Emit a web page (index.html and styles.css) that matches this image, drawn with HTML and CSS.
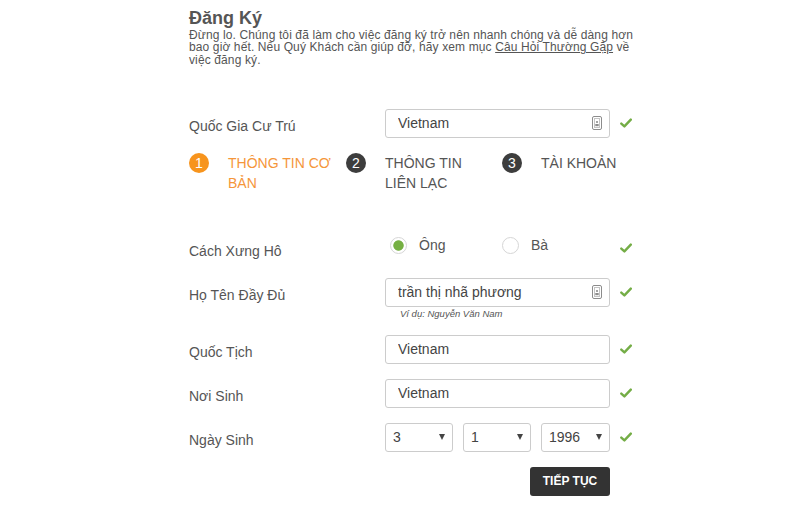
FILE: index.html
```html
<!DOCTYPE html>
<html lang="vi">
<head>
<meta charset="utf-8">
<title>Đăng Ký</title>
<link rel="stylesheet" href="styles.css">
</head>
<body>
<main class="page">
  <h1 class="title">Đăng Ký</h1>
  <p class="intro">Đừng lo. Chúng tôi đã làm cho việc đăng ký trở nên nhanh chóng và dễ dàng hơn bao giờ hết. Nếu Quý Khách cần giúp đỡ, hãy xem mục <a href="#">Câu Hỏi Thường Gặp</a> về việc đăng ký.</p>

  <form class="form">
    <div class="row">
      <label class="label">Quốc Gia Cư Trú</label>
      <div class="field">
        <div class="input">
          <input type="text" value="Vietnam">
          <svg class="card" width="10" height="14" viewBox="0 0 10 14"><rect x="0.5" y="0.5" width="9" height="13" rx="1.5" fill="none" stroke="#8c8c8c"/><rect x="2.5" y="2.5" width="5" height="9" fill="none" stroke="#c4c4c4"/><circle cx="5" cy="6" r="1.1" fill="#8c8c8c"/><rect x="3.3" y="8" width="3.4" height="2.2" fill="#8c8c8c"/></svg>
        </div>
      </div>
      <svg class="check" width="12" height="10" viewBox="0 0 12 10"><path d="M1.3 5.6 L4.4 8.4 L10.8 1.6" fill="none" stroke="#74ad46" stroke-width="2.4" stroke-linecap="round" stroke-linejoin="round"/></svg>
    </div>

    <ol class="steps">
      <li class="step active"><span class="num">1</span><span class="step-text">THÔNG TIN CƠ BẢN</span></li>
      <li class="step"><span class="num">2</span><span class="step-text">THÔNG TIN LIÊN LẠC</span></li>
      <li class="step"><span class="num">3</span><span class="step-text">TÀI KHOẢN</span></li>
    </ol>

    <div class="row row-radio">
      <label class="label">Cách Xưng Hô</label>
      <div class="field radios">
        <label class="opt"><input type="radio" name="title" checked><span>Ông</span></label>
        <label class="opt"><input type="radio" name="title"><span>Bà</span></label>
      </div>
      <svg class="check" width="12" height="10" viewBox="0 0 12 10"><path d="M1.3 5.6 L4.4 8.4 L10.8 1.6" fill="none" stroke="#74ad46" stroke-width="2.4" stroke-linecap="round" stroke-linejoin="round"/></svg>
    </div>

    <div class="row">
      <label class="label">Họ Tên Đầy Đủ</label>
      <div class="field">
        <div class="input">
          <input type="text" value="trần thị nhã phương">
          <svg class="card" width="10" height="14" viewBox="0 0 10 14"><rect x="0.5" y="0.5" width="9" height="13" rx="1.5" fill="none" stroke="#8c8c8c"/><rect x="2.5" y="2.5" width="5" height="9" fill="none" stroke="#c4c4c4"/><circle cx="5" cy="6" r="1.1" fill="#8c8c8c"/><rect x="3.3" y="8" width="3.4" height="2.2" fill="#8c8c8c"/></svg>
        </div>
        <div class="hint">Ví dụ: Nguyễn Văn Nam</div>
      </div>
      <svg class="check" width="12" height="10" viewBox="0 0 12 10"><path d="M1.3 5.6 L4.4 8.4 L10.8 1.6" fill="none" stroke="#74ad46" stroke-width="2.4" stroke-linecap="round" stroke-linejoin="round"/></svg>
    </div>

    <div class="row">
      <label class="label">Quốc Tịch</label>
      <div class="field">
        <div class="input"><input type="text" value="Vietnam"></div>
      </div>
      <svg class="check" width="12" height="10" viewBox="0 0 12 10"><path d="M1.3 5.6 L4.4 8.4 L10.8 1.6" fill="none" stroke="#74ad46" stroke-width="2.4" stroke-linecap="round" stroke-linejoin="round"/></svg>
    </div>

    <div class="row">
      <label class="label">Nơi Sinh</label>
      <div class="field">
        <div class="input"><input type="text" value="Vietnam"></div>
      </div>
      <svg class="check" width="12" height="10" viewBox="0 0 12 10"><path d="M1.3 5.6 L4.4 8.4 L10.8 1.6" fill="none" stroke="#74ad46" stroke-width="2.4" stroke-linecap="round" stroke-linejoin="round"/></svg>
    </div>

    <div class="row">
      <label class="label">Ngày Sinh</label>
      <div class="field selects">
        <div class="select"><span>3</span><span class="arrow"></span></div>
        <div class="select"><span>1</span><span class="arrow"></span></div>
        <div class="select"><span>1996</span><span class="arrow"></span></div>
      </div>
      <svg class="check" width="12" height="10" viewBox="0 0 12 10"><path d="M1.3 5.6 L4.4 8.4 L10.8 1.6" fill="none" stroke="#74ad46" stroke-width="2.4" stroke-linecap="round" stroke-linejoin="round"/></svg>
    </div>

    <div class="row">
      <span class="label"></span>
      <div class="field actions">
        <button type="button" class="btn">TIẾP TỤC</button>
      </div>
    </div>
  </form>
</main>
</body>
</html>
```

FILE: styles.css
```css
* { box-sizing: border-box; }

body {
  margin: 0;
  background: #fff;
  font-family: "Liberation Sans", Arial, sans-serif;
  color: #555;
}

.page {
  width: 446px;
  margin-left: 189px;
  padding-top: 7px;
}

.title {
  margin: 0;
  font-size: 18px;
  line-height: 22px;
  font-weight: bold;
  color: #555;
}

.intro {
  margin: 0;
  font-size: 12px;
  line-height: 12.3px;
  letter-spacing: 0.12px;
  color: #555;
}

.intro a {
  color: #555;
  text-decoration: underline;
}

.form {
  display: flex;
  flex-direction: column;
  gap: 15px;
  margin-top: 43px;
}

.row {
  display: grid;
  grid-template-columns: 186px 225px 12px;
  column-gap: 10px;
  align-items: start;
  min-height: 29px;
}

.label {
  font-size: 14px;
  line-height: 20px;
  padding-top: 7px;
  color: #555;
}

.check {
  display: block;
  margin-top: 9px;
}

.input {
  height: 29px;
  border: 1px solid #ccc;
  border-radius: 3px;
  background: #fff;
  display: flex;
  align-items: center;
  padding: 0 7px 0 12px;
}

.input input {
  flex: 1;
  min-width: 0;
  border: 0;
  outline: 0;
  padding: 0;
  background: transparent;
  font-family: "Liberation Sans", Arial, sans-serif;
  font-size: 14px;
  color: #444;
}

.card {
  display: block;
  flex: none;
}

.hint {
  font-size: 9.5px;
  line-height: 13px;
  font-style: italic;
  color: #555;
  padding-left: 15px;
}

/* steps */
.steps {
  list-style: none;
  margin: 0;
  padding: 0;
  display: flex;
}

.step {
  flex: none;
  display: flex;
  align-items: flex-start;
  width: 157px;
}

.step:nth-child(2) { width: 156px; }
.step:last-child { width: auto; }

.num {
  flex: none;
  width: 20px;
  height: 20px;
  border-radius: 50%;
  background: #3d3d3d;
  color: #fff;
  font-size: 14px;
  line-height: 20px;
  text-align: center;
  margin-right: 19px;
}

.step-text {
  width: 108px;
  font-size: 14px;
  line-height: 20px;
  color: #555;
}

.step.active .num { background: #f7941d; }
.step.active .step-text { color: #f5963a; }

/* radios */
.row-radio { margin-top: 26px; }

.radios {
  display: grid;
  grid-template-columns: 112px 1fr;
  padding-top: 3px;
  padding-left: 5px;
}

.opt {
  display: flex;
  align-items: center;
  gap: 12px;
  font-size: 14px;
  line-height: 16px;
  color: #555;
}

.opt input {
  -webkit-appearance: none;
  appearance: none;
  margin: 0;
  width: 17px;
  height: 17px;
  border: 1px solid #d6d6d6;
  border-radius: 50%;
  background: #fff;
}

.opt input:checked {
  background: radial-gradient(circle, #76b043 0 4.8px, #fff 5.6px);
}

/* selects */
.selects {
  display: grid;
  grid-template-columns: 68px 68px 69px;
  column-gap: 10px;
}

.select {
  height: 29px;
  border: 1px solid #ccc;
  border-radius: 3px;
  display: flex;
  align-items: center;
  justify-content: space-between;
  padding: 0 7px 0 7px;
  font-size: 14px;
  color: #444;
}

.arrow {
  width: 0;
  height: 0;
  border-left: 3.5px solid transparent;
  border-right: 3.5px solid transparent;
  border-top: 6px solid #444;
}

/* button */
.actions {
  display: flex;
  justify-content: flex-end;
}

.btn {
  width: 80px;
  height: 29px;
  border: 0;
  border-radius: 3px;
  background: #333;
  color: #fff;
  font-family: "Liberation Sans", Arial, sans-serif;
  font-size: 12px;
  font-weight: bold;
  padding: 0;
}
```
